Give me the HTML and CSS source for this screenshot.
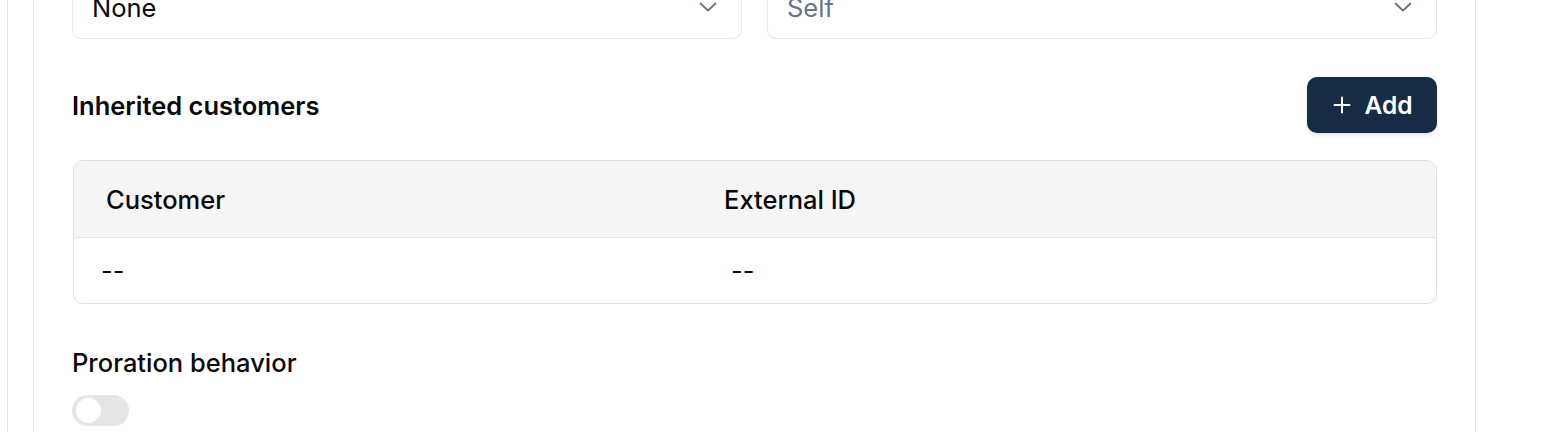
FILE: index.html
```html
<!DOCTYPE html>
<html>
<head>
<meta charset="utf-8">
<link rel="stylesheet" href="styles.css">
</head>
<body>
<div class="page">
  <div class="card">
    <div class="selects">
      <div class="select">
        <span class="value">None</span>
        <svg class="chev" width="18" height="10" viewBox="0 0 18 10"><path d="M1.5 1.5 L9 8.5 L16.5 1.5" fill="none" stroke="#6b7280" stroke-width="1.8" stroke-linecap="round" stroke-linejoin="round"/></svg>
      </div>
      <div class="select">
        <span class="value placeholder">Self</span>
        <svg class="chev" width="18" height="10" viewBox="0 0 18 10"><path d="M1.5 1.5 L9 8.5 L16.5 1.5" fill="none" stroke="#6b7280" stroke-width="1.8" stroke-linecap="round" stroke-linejoin="round"/></svg>
      </div>
    </div>

    <div class="section-head">
      <h2 class="title">Inherited customers</h2>
      <button class="add-btn">
        <svg width="18" height="18" viewBox="0 0 18 18"><path d="M9 1.5 V16.5 M1.5 9 H16.5" stroke="#fff" stroke-width="2" stroke-linecap="round"/></svg>
        <span>Add</span>
      </button>
    </div>

    <div class="table">
      <div class="thead">
        <div class="th">Customer</div>
        <div class="th">External ID</div>
      </div>
      <div class="trow">
        <div class="td">--</div>
        <div class="td">--</div>
      </div>
    </div>

    <div class="field">
      <div class="label">Proration behavior</div>
      <div class="toggle"><span class="knob"></span></div>
    </div>
  </div>
</div>
</body>
</html>
```
FILE: styles.css
```css
* { box-sizing: border-box; }
html, body {
  margin: 0;
  padding: 0;
  background: #ffffff;
  font-family: Inter, "Liberation Sans", sans-serif;
  color: #0a0a0a;
}
.page {
  margin-left: 7px;
  border-left: 1px solid #e4e4e7;
  padding-left: 25px;
  height: 432px;
  overflow: hidden;
}
.card {
  display: flow-root;
  width: 1443px;
  border-left: 1px solid #e4e4e7;
  border-right: 1px solid #e4e4e7;
  padding: 0 38px 0 38px;
  height: 432px;
}
.selects {
  display: grid;
  grid-template-columns: 670px 670px;
  column-gap: 25px;
  margin-top: -17px;
}
.select {
  height: 56px;
  border: 1px solid #e5e7eb;
  border-radius: 9px;
  display: flex;
  align-items: center;
  justify-content: space-between;
  padding: 0 24px 0 19px;
  font-size: 25.5px;
}
.select .value { margin-top: -8px; }
.select .chev { margin-top: -8px; }
.placeholder { color: #64748b; }
.section-head {
  margin-top: 38px;
  display: flex;
  align-items: center;
  justify-content: space-between;
  height: 56px;
}
.title {
  margin: 0;
  font-size: 25.5px;
  font-weight: 600;
}
.add-btn {
  height: 56px;
  width: 130px;
  border: none;
  border-radius: 10px;
  background: #152c44;
  color: #fff;
  font-family: inherit;
  font-size: 24.5px;
  font-weight: 600;
  display: flex;
  align-items: center;
  justify-content: center;
  gap: 13px;
  box-shadow: 0 2px 4px rgba(0,0,0,0.12);
  padding: 0 0 0 2px;
}
.table {
  margin-top: 27px;
  margin-left: 1px;
  width: 1364px;
  border: 1px solid #e0e0e3;
  border-radius: 10px;
  overflow: hidden;
}
.thead {
  display: grid;
  grid-template-columns: 618px 1fr;
  background: #f5f5f5;
  height: 77px;
  align-items: center;
  border-bottom: 1px solid #e4e4e7;
  padding-left: 32px;
}
.th {
  font-size: 25.5px;
  font-weight: 500;
}
.trow {
  display: grid;
  grid-template-columns: 630px 1fr;
  height: 65px;
  align-items: center;
  padding-left: 27px;
}
.td {
  font-size: 25.5px;
}
.field { margin-top: 43px; }
.label {
  font-size: 25.5px;
  font-weight: 500;
  line-height: 31px;
}
.toggle {
  margin-top: 17px;
  width: 57px;
  height: 31px;
  border-radius: 16px;
  background: #e5e5e5;
  padding: 3px 0 0 4px;
}
.knob {
  display: block;
  width: 25px;
  height: 25px;
  border-radius: 50%;
  background: #fff;
}
```
